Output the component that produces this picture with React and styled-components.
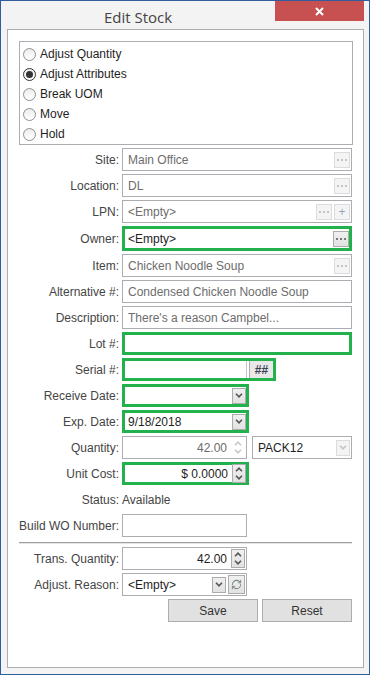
import React from "react";
import styled, { createGlobalStyle } from "styled-components";
import { RefreshCw } from "lucide-react";

const GlobalStyle = createGlobalStyle`
  html, body {
    margin: 0;
    padding: 0;
    background: #f3f3f3;
  }
  body {
    font-family: "Liberation Sans", Arial, sans-serif;
    font-size: 12px;
  }
  * {
    box-sizing: border-box;
  }
`;

const Window = styled.div`
  width: 370px;
  height: 675px;
  border: 1px solid #2f5d9e;
  background: #f3f3f3;
  display: flex;
  flex-direction: column;
`;

const TitleBar = styled.div`
  display: flex;
  align-items: flex-start;
  height: 28px;
  flex-shrink: 0;
`;

const Title = styled.div`
  flex: 1;
  text-align: center;
  font-family: "Open Sans", "Noto Sans", sans-serif;
  font-size: 15px;
  line-height: 20px;
  padding-top: 6px;
  color: #444;
`;

const CloseButton = styled.div`
  width: 89px;
  height: 20px;
  margin-right: 5px;
  background: #c75050;
  display: flex;
  align-items: center;
  justify-content: center;
`;

const Body = styled.div`
  flex: 1;
  display: flex;
  padding: 0 5px 6px 6px;
`;

const Panel = styled.div`
  flex: 1;
  background: #fff;
  border: 1px solid #abadb3;
  padding: 11px 10px 0 11px;
`;

const RadioBox = styled.div`
  height: 104px;
  border: 1px solid #abadb3;
  padding: 2px 3px 0;
`;

const RadioItem = styled.div`
  display: flex;
  align-items: center;
  gap: 4px;
  height: 20px;
  color: #1e1e1e;
`;

const RadioCircle = styled.span`
  position: relative;
  width: 13px;
  height: 13px;
  border-radius: 50%;
  border: 1px solid ${(p) => (p.$checked ? "#333" : "#8f8f8f")};
  background: linear-gradient(#ececec, #fff);
  flex-shrink: 0;

  &::after {
    content: "";
    display: ${(p) => (p.$checked ? "block" : "none")};
    position: absolute;
    inset: 2px;
    border-radius: 50%;
    background: #333;
  }
`;

const Form = styled.div`
  display: grid;
  grid-template-columns: 100px 230px;
  column-gap: 3px;
  row-gap: 3px;
  margin-top: 3px;
`;

const Label = styled.div`
  display: flex;
  align-items: center;
  justify-content: flex-end;
  white-space: nowrap;
  color: #444;
`;

const FieldGroup = styled.div`
  display: flex;
  gap: 5px;
`;

const Field = styled.div`
  display: flex;
  align-items: center;
  width: ${(p) => p.$width || 230}px;
  height: ${(p) => (p.$tall ? 25 : 23)}px;
  border: ${(p) => (p.$highlight ? "3px solid #22b14c" : "1px solid #abadb3")};
  background: #fff;
  padding: 0 ${(p) => (p.$highlight ? 0 : 1)}px 0 ${(p) => (p.$highlight ? 3 : 5)}px;
  color: ${(p) => (p.$muted ? "#6d6d6d" : "#1e1e1e")};
  flex-shrink: 0;
`;

const Value = styled.span`
  flex: 1;
  align-self: stretch;
  display: flex;
  align-items: center;
  justify-content: ${(p) => (p.$right ? "flex-end" : "flex-start")};
  padding-right: ${(p) => (p.$right ? 4 : 0)}px;
  white-space: nowrap;
  overflow: hidden;
  border-right: ${(p) => (p.$divider ? "1px solid #c4c4c4" : "none")};
`;

const PlainValue = styled.div`
  display: flex;
  align-items: center;
  height: 23px;
  color: #444;
`;

const SmallButton = styled.div`
  width: ${(p) => p.$w || 16}px;
  height: ${(p) => p.$h || 16}px;
  margin-left: ${(p) => p.$gap || 0}px;
  display: flex;
  flex-direction: column;
  align-items: center;
  justify-content: center;
  border: 1px solid ${(p) => (p.$disabled ? "#dcdcdc" : "#acacac")};
  background: ${(p) => (p.$disabled ? "#f4f4f4" : "linear-gradient(#f0f0f0, #e2e2e2)")};
  color: ${(p) => (p.$disabled ? "#c4c4c4" : "#7a7a7a")};
  flex-shrink: 0;
`;

const SpinBox = styled.div`
  width: 14px;
  height: 19px;
  display: flex;
  flex-direction: column;
  align-items: center;
  justify-content: center;
  gap: 3px;
  border: 1px solid ${(p) => (p.$disabled ? "transparent" : "#acacac")};
  background: ${(p) => (p.$disabled ? "transparent" : "linear-gradient(#f0f0f0, #e2e2e2)")};
  color: ${(p) => (p.$disabled ? "#c8c8c8" : "#555")};
  flex-shrink: 0;
`;

const HashButton = styled.div`
  width: 24px;
  align-self: stretch;
  margin-left: 2px;
  border-left: 1px solid #adadad;
  background: #e8e8e8;
  display: flex;
  align-items: center;
  justify-content: center;
  font-size: 12px;
  font-weight: 700;
  color: #3a3f55;
`;

const Separator = styled.div`
  grid-column: 1 / -1;
  height: 2px;
  margin-top: 2px;
  border-top: 1px solid #a0a0a0;
  border-bottom: 1px solid #e4e4e4;
`;

const ButtonRow = styled.div`
  grid-column: 1 / -1;
  display: flex;
  justify-content: flex-end;
  gap: 4px;
`;

const ActionButton = styled.button`
  width: 90px;
  height: 23px;
  border: 1px solid #adadad;
  background: #e1e1e1;
  font-family: inherit;
  font-size: 12px;
  color: #333;
  padding: 0;
`;

const Dots = () => (
  <svg width="10" height="2" viewBox="0 0 10 2">
    <rect x="0" y="0" width="2" height="2" fill="currentColor" />
    <rect x="4" y="0" width="2" height="2" fill="currentColor" />
    <rect x="8" y="0" width="2" height="2" fill="currentColor" />
  </svg>
);

const Chevron = ({ up }) => (
  <svg width="8" height="5" viewBox="0 0 8 5">
    <path
      d={up ? "M1 4.2 L4 1.2 L7 4.2" : "M1 0.8 L4 3.8 L7 0.8"}
      fill="none"
      stroke="currentColor"
      strokeWidth="1.6"
    />
  </svg>
);

const Ellipsis = ({ disabled }) => (
  <SmallButton $disabled={disabled}>
    <Dots />
  </SmallButton>
);

const DropButton = ({ disabled }) => (
  <SmallButton $w={14} $h={16} $disabled={disabled} style={{ color: disabled ? "#c4c4c4" : "#555" }}>
    <Chevron />
  </SmallButton>
);

const Spinner = ({ disabled }) => (
  <SpinBox $disabled={disabled}>
    <Chevron up />
    <Chevron />
  </SpinBox>
);

const radios = [
  { label: "Adjust Quantity" },
  { label: "Adjust Attributes", checked: true },
  { label: "Break UOM" },
  { label: "Move" },
  { label: "Hold" },
];

export default function App() {
  return (
    <>
      <GlobalStyle />
      <Window>
        <TitleBar>
          <Title>Edit Stock</Title>
          <CloseButton>
            <svg width="9" height="9" viewBox="0 0 9 9">
              <path d="M1 1 L8 8 M8 1 L1 8" stroke="#fff" strokeWidth="2" />
            </svg>
          </CloseButton>
        </TitleBar>
        <Body>
          <Panel>
            <RadioBox>
              {radios.map((r) => (
                <RadioItem key={r.label}>
                  <RadioCircle $checked={r.checked} />
                  {r.label}
                </RadioItem>
              ))}
            </RadioBox>

            <Form>
              <Label>Site:</Label>
              <Field $muted>
                <Value>Main Office</Value>
                <Ellipsis disabled />
              </Field>

              <Label>Location:</Label>
              <Field $muted>
                <Value>DL</Value>
                <Ellipsis disabled />
              </Field>

              <Label>LPN:</Label>
              <Field $muted>
                <Value>&lt;Empty&gt;</Value>
                <Ellipsis disabled />
                <SmallButton $disabled $gap={2}>
                  <span style={{ color: "#9aa6b8", fontSize: 12, lineHeight: 1 }}>+</span>
                </SmallButton>
              </Field>

              <Label>Owner:</Label>
              <Field $highlight $tall>
                <Value>&lt;Empty&gt;</Value>
                <Ellipsis />
              </Field>

              <Label>Item:</Label>
              <Field $muted>
                <Value>Chicken Noodle Soup</Value>
                <Ellipsis disabled />
              </Field>

              <Label>Alternative #:</Label>
              <Field $muted>
                <Value>Condensed Chicken Noodle Soup</Value>
              </Field>

              <Label>Description:</Label>
              <Field $muted>
                <Value>There's a reason Campbel...</Value>
              </Field>

              <Label>Lot #:</Label>
              <Field $highlight>
                <Value />
              </Field>

              <Label>Serial #:</Label>
              <Field $highlight $width={154}>
                <Value $divider />
                <HashButton>##</HashButton>
              </Field>

              <Label>Receive Date:</Label>
              <Field $highlight $width={127}>
                <Value />
                <DropButton />
              </Field>

              <Label>Exp. Date:</Label>
              <Field $highlight $width={127}>
                <Value>9/18/2018</Value>
                <DropButton />
              </Field>

              <Label>Quantity:</Label>
              <FieldGroup>
                <Field $muted $width={125}>
                  <Value $right>42.00</Value>
                  <Spinner disabled />
                </Field>
                <Field $width={100}>
                  <Value>PACK12</Value>
                  <DropButton disabled />
                </Field>
              </FieldGroup>

              <Label>Unit Cost:</Label>
              <Field $highlight $width={127}>
                <Value $right>$ 0.0000</Value>
                <Spinner />
              </Field>

              <Label>Status:</Label>
              <PlainValue>Available</PlainValue>

              <Label>Build WO Number:</Label>
              <Field $width={125}>
                <Value />
              </Field>

              <Separator />

              <Label>Trans. Quantity:</Label>
              <Field $width={125}>
                <Value $right>42.00</Value>
                <Spinner />
              </Field>

              <Label>Adjust. Reason:</Label>
              <Field $width={125}>
                <Value>&lt;Empty&gt;</Value>
                <DropButton />
                <SmallButton $w={17} $h={19} $gap={2}>
                  <RefreshCw size={11} color="#7f8c8c" strokeWidth={2.2} />
                </SmallButton>
              </Field>

              <ButtonRow>
                <ActionButton>Save</ActionButton>
                <ActionButton>Reset</ActionButton>
              </ButtonRow>
            </Form>
          </Panel>
        </Body>
      </Window>
    </>
  );
}
